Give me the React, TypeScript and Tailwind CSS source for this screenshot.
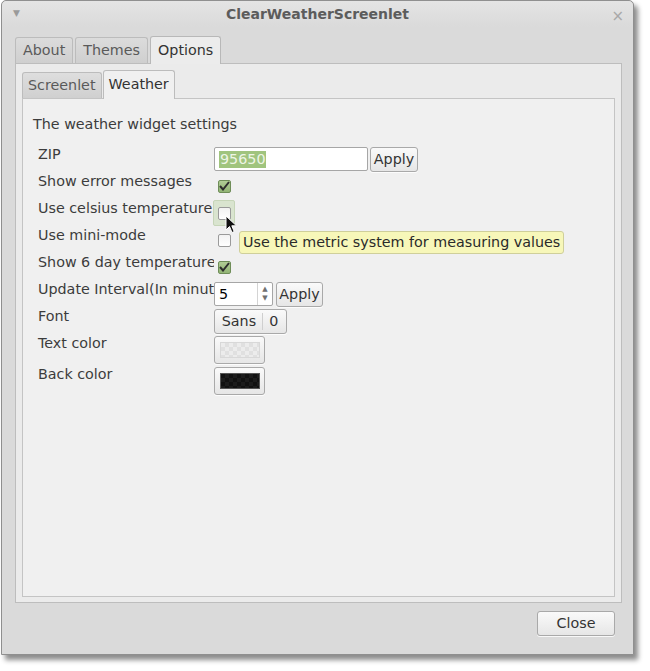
const font = "font-['DejaVu_Sans',sans-serif]";

function Tab({ label, active }: { label: string; active?: boolean }) {
  return active ? (
    <div className="relative -mb-px h-[28px] px-[7px] flex items-center rounded-t-[3px] border border-b-0 border-[#b8b8b8] bg-[#ececec] text-[#333] z-10">
      {label}
    </div>
  ) : (
    <div className="h-[26px] px-[7px] flex items-center rounded-t-[3px] border border-b-0 border-[#bcbcbc] bg-gradient-to-b from-[#dcdcdc] to-[#cfcfcf] text-[#5a5a5a]">
      {label}
    </div>
  );
}

function SubTab({ label, active }: { label: string; active?: boolean }) {
  return active ? (
    <div className="relative -mb-px h-[29px] px-[5px] flex items-center rounded-t-[3px] border border-b-0 border-[#bcbcbc] bg-[#f0f0f0] text-[#333] z-10">
      {label}
    </div>
  ) : (
    <div className="h-[26px] px-[5px] flex items-center rounded-t-[3px] border border-b-0 border-[#bcbcbc] bg-gradient-to-b from-[#dedede] to-[#d0d0d0] text-[#5a5a5a]">
      {label}
    </div>
  );
}

function Button({ children, className = "" }: { children: React.ReactNode; className?: string }) {
  return (
    <div
      className={`flex items-center justify-center rounded-[3px] border border-[#a9a9a9] bg-gradient-to-b from-[#fafafa] to-[#e6e6e6] text-[#333] shadow-[0_1px_0_rgba(255,255,255,0.8)] ${className}`}
    >
      {children}
    </div>
  );
}

function Check({ checked, hover }: { checked?: boolean; hover?: boolean }) {
  return (
    <div
      className={`-ml-px w-[22px] h-[26px] -mt-px flex items-center justify-center rounded-[2px] ${
        hover ? "bg-[#d9e4cf] border border-[#c6d5b8]" : ""
      }`}
    >
      {checked ? (
        <div className="w-[13px] h-[13px] rounded-[2px] border border-[#6f8d58] bg-gradient-to-b from-[#b0cc95] to-[#92b475] flex items-center justify-center">
          <svg width="11" height="10" viewBox="0 0 11 10">
            <path d="M1 5 L4 8.5 L10 1" fill="none" stroke="#2d2d2d" strokeWidth="2" />
          </svg>
        </div>
      ) : (
        <div className="w-[13px] h-[13px] rounded-[2px] border border-[#9a9a9a] bg-gradient-to-b from-[#f2f2f2] to-[#ffffff]" />
      )}
    </div>
  );
}

function Row({ label, children, tall }: { label: string; children: React.ReactNode; tall?: boolean }) {
  return (
    <div className={`flex ${tall ? "h-[28px]" : "h-[24px]"}`}>
      <div className="w-[181px] pl-[5px] overflow-hidden whitespace-nowrap leading-[15px] text-[#3c3c3c]">{label}</div>
      <div className="flex items-start">{children}</div>
    </div>
  );
}

export default function App() {
  return (
    <div className={`w-[650px] h-[671px] bg-white ${font} text-[14.3px]`}>
      <div className="ml-px w-[633px] h-[655px] flex flex-col rounded-t-[5px] border border-[#8f8f8f] bg-[#dadada] shadow-[4px_5px_5px_rgba(0,0,0,0.45)]">
        {/* title bar */}
        <div className="relative h-[26px] flex items-center justify-center rounded-t-[5px] bg-gradient-to-b from-[#e4e4e4] to-[#dadada]">
          <span className="absolute left-[11px] top-[6px] text-[9px] text-[#9a9a9a]">▼</span>
          <span className="font-bold text-[14px] text-[#5c5c5c]">ClearWeatherScreenlet</span>
          <span className="absolute right-[9px] top-[4px] text-[15px] text-[#a8a8a8]">×</span>
        </div>

        <div className="flex-1 flex flex-col pl-[13px] pr-[11px] pt-[8px]">
          {/* outer tabs */}
          <div className="flex items-end gap-[2px] h-[28px]">
            <Tab label="About" />
            <Tab label="Themes" />
            <Tab label="Options" active />
          </div>
          <div className="h-[540px] border border-[#bdbdbd] bg-[#ebebeb] px-[6px] pt-[5px] pb-[5px] flex flex-col">
            <div className="flex items-end gap-px h-[29px]">
              <SubTab label="Screenlet" />
              <SubTab label="Weather" active />
            </div>
            <div className="relative flex-1 border border-[#c4c4c4] bg-[#f0f0f0] pl-[10px] pt-[18px]">
              <div className="leading-[15px] text-[#3c3c3c]">The weather widget settings</div>
              <div className="mt-[15px] flex flex-col gap-[3px]">
                <Row label="ZIP">
                  <div className="w-[154px] h-[24px] rounded-[2px] border border-[#a6a6a6] bg-white flex items-center pl-[4px]">
                    <span className="bg-[#a0c47e] text-[#eef5e6] leading-[17px] px-px">95650</span>
                  </div>
                  <Button className="ml-[2px] w-[48px] h-[25px]">Apply</Button>
                </Row>
                <Row label="Show error messages">
                  <Check checked />
                </Row>
                <Row label="Use celsius temperature">
                  <Check hover />
                </Row>
                <Row label="Use mini-mode">
                  <Check />
                </Row>
                <Row label="Show 6 day temperature">
                  <Check checked />
                </Row>
                <Row label="Update Interval(In minutes)">
                  <div className="w-[59px] h-[24px] rounded-[2px] border border-[#a6a6a6] bg-white flex">
                    <div className="flex-1 pl-[4px] pt-[3px] leading-[17px]">5</div>
                    <div className="w-[15px] border-l border-[#d4d4d4] flex flex-col items-center justify-center text-[7px] leading-[9px] text-[#707070]">
                      <span>▲</span>
                      <span>▼</span>
                    </div>
                  </div>
                  <Button className="ml-[3px] w-[47px] h-[25px]">Apply</Button>
                </Row>
                <Row label="Font">
                  <Button className="w-[73px] h-[25px]">
                    <span className="pl-[1px] pr-[6px]">Sans</span>
                    <span className="h-[17px] border-l border-[#cfcfcf]" />
                    <span className="pl-[6px] pr-[2px]">0</span>
                  </Button>
                </Row>
                <Row label="Text color" tall>
                  <Button className="w-[51px] h-[28px]">
                    <div className="w-[40px] h-[16px] border border-[#d8d8d8] bg-[#ececec] bg-[linear-gradient(45deg,#e0e0e0_25%,transparent_25%,transparent_75%,#e0e0e0_75%),linear-gradient(45deg,#e0e0e0_25%,transparent_25%,transparent_75%,#e0e0e0_75%)] bg-[length:8px_8px] bg-[position:0_0,4px_4px]" />
                  </Button>
                </Row>
                <Row label="Back color" tall>
                  <Button className="w-[51px] h-[28px]">
                    <div className="w-[40px] h-[16px] border border-[#555] bg-[#111] bg-[linear-gradient(45deg,#1c1c1c_25%,transparent_25%,transparent_75%,#1c1c1c_75%),linear-gradient(45deg,#1c1c1c_25%,transparent_25%,transparent_75%,#1c1c1c_75%)] bg-[length:8px_8px] bg-[position:0_0,4px_4px]" />
                  </Button>
                </Row>
              </div>

              {/* tooltip */}
              <div className="absolute left-[216px] top-[132px] w-[325px] h-[23px] px-[3px] flex items-center rounded-[3px] border border-[#cfcf9a] bg-[#f7f7b9] text-[#2a2a2a] whitespace-nowrap">
                Use the metric system for measuring values
              </div>
              {/* mouse cursor */}
              <svg className="absolute left-[202px] top-[116px]" width="13" height="19" viewBox="0 0 13 19">
                <path
                  d="M1 1 L1 15 L4.5 11.5 L7 17.5 L9.2 16.6 L6.8 10.8 L11.5 10.8 Z"
                  fill="#111"
                  stroke="#fff"
                  strokeWidth="1"
                  strokeLinejoin="round"
                />
              </svg>
            </div>
          </div>

          <div className="flex justify-end pt-[8px] pr-[7px]">
            <Button className="w-[78px] h-[25px]">Close</Button>
          </div>
        </div>
      </div>
    </div>
  );
}
